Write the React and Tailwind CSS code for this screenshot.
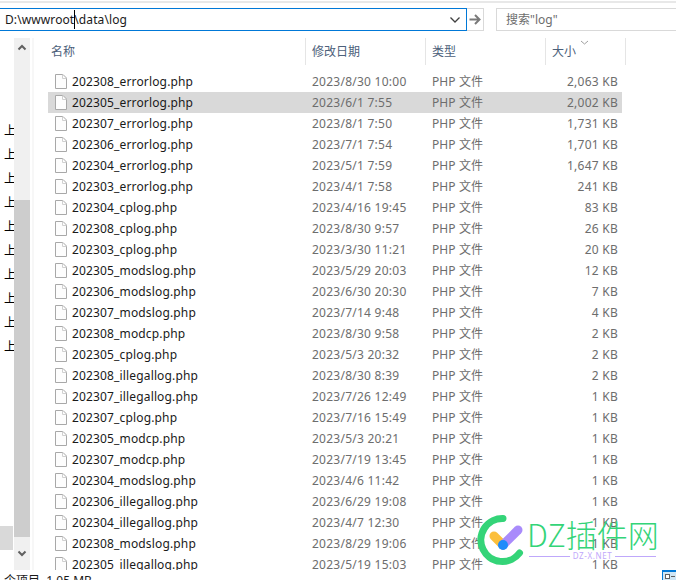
const FONT = "font-['Noto_Sans','Noto_Sans_CJK_SC',sans-serif]";

const rows = [
  ["202308_errorlog.php", "2023/8/30 10:00", "2,063 KB"],
  ["202305_errorlog.php", "2023/6/1 7:55", "2,002 KB"],
  ["202307_errorlog.php", "2023/8/1 7:50", "1,731 KB"],
  ["202306_errorlog.php", "2023/7/1 7:54", "1,701 KB"],
  ["202304_errorlog.php", "2023/5/1 7:59", "1,647 KB"],
  ["202303_errorlog.php", "2023/4/1 7:58", "241 KB"],
  ["202304_cplog.php", "2023/4/16 19:45", "83 KB"],
  ["202308_cplog.php", "2023/8/30 9:57", "26 KB"],
  ["202303_cplog.php", "2023/3/30 11:21", "20 KB"],
  ["202305_modslog.php", "2023/5/29 20:03", "12 KB"],
  ["202306_modslog.php", "2023/6/30 20:30", "7 KB"],
  ["202307_modslog.php", "2023/7/14 9:48", "4 KB"],
  ["202308_modcp.php", "2023/8/30 9:58", "2 KB"],
  ["202305_cplog.php", "2023/5/3 20:32", "2 KB"],
  ["202308_illegallog.php", "2023/8/30 8:39", "2 KB"],
  ["202307_illegallog.php", "2023/7/26 12:49", "1 KB"],
  ["202307_cplog.php", "2023/7/16 15:49", "1 KB"],
  ["202305_modcp.php", "2023/5/3 20:21", "1 KB"],
  ["202307_modcp.php", "2023/7/19 13:45", "1 KB"],
  ["202304_modslog.php", "2023/4/6 11:42", "1 KB"],
  ["202306_illegallog.php", "2023/6/29 19:08", "1 KB"],
  ["202304_illegallog.php", "2023/4/7 12:30", "1 KB"],
  ["202308_modslog.php", "2023/8/29 19:06", "1 KB"],
  ["202305_illegallog.php", "2023/5/19 15:03", "1 KB"],
];

function FileIcon() {
  return (
    <svg width="14" height="17" viewBox="0 0 14 17" className="shrink-0">
      <path d="M1.5 1.5H9L12.5 5V15.5H1.5Z" fill="#fdfdfd" stroke="#a8a8a8" />
      <path d="M8.5 1.5V5.5H12.5" fill="none" stroke="#d0d0d0" />
    </svg>
  );
}

function Chevron({ up, className }) {
  return (
    <svg width="10" height="7" viewBox="0 0 10 7" className={className}>
      <path d={up ? "M1.5 5.5L5 2L8.5 5.5" : "M1.5 1.5L5 5L8.5 1.5"} fill="none" stroke="#606060" strokeWidth="2" />
    </svg>
  );
}

function Header({ label, className }) {
  return (
    <div className={`h-[27px] flex items-center border-r border-[#e5e5e5] text-[12px] text-[#4c607a] ${className}`}>
      {label}
    </div>
  );
}

export default function App() {
  return (
    <div className={`relative w-[676px] h-[580px] overflow-hidden bg-white flex flex-col ${FONT} text-[12px]`}>
      <div className="h-[3px] border-b-2 border-[#e8e8e8] shrink-0" />
      <div className="h-[5px] shrink-0" />

      <div className="h-[23px] shrink-0 flex">
        <div className="w-[467px] border-y border-r border-[#0078d7] flex items-center pl-[5px] pr-[4px] relative">
          <span className="text-[#1a1a1a] tracking-[0.1px]">D:\wwwroot\data\log</span>
          <div className="absolute left-[74px] top-[1px] w-px h-[19px] bg-black" />
          <svg width="12" height="8" viewBox="0 0 12 8" className="ml-auto mr-[1px]">
            <path d="M1.5 1.5L6 6L10.5 1.5" fill="none" stroke="#404040" strokeWidth="1.3" />
          </svg>
        </div>
        <div className="w-[17px] border-y border-r border-[#d9d9d9] flex items-center justify-center">
          <svg width="12" height="11" viewBox="0 0 12 11">
            <path d="M0.5 5.5H10M6 1L10.5 5.5L6 10" fill="none" stroke="#7a7a7a" strokeWidth="2" />
          </svg>
        </div>
        <div className="ml-[12px] flex-1 border-y border-l border-[#d9d9d9] flex items-center pl-[9px] text-[#6d6d6d]">
          搜索"log"
        </div>
      </div>

      <div className="h-[7px] shrink-0" />

      <div className="flex-1 min-h-0 flex">
        <div className="w-[14px] shrink-0 relative flex flex-col">
          <div className="h-[81px] shrink-0" />
          {Array.from({ length: 10 }).map((_, i) => (
            <div key={i} className="h-[24px] shrink-0 pl-[4px] leading-[24px] text-[12px] text-black overflow-hidden">上</div>
          ))}
          <div className="mt-[167px] h-[24px] w-[13px] bg-[#d9d9d9] shrink-0" />
        </div>

        <div className="w-[16px] h-[532px] shrink-0 bg-[#f0f0f0] flex flex-col items-center">
          <div className="h-[162px] w-full pt-[6px] flex justify-center items-start">
            <Chevron up />
          </div>
          <div className="h-[337px] w-full bg-[#cdcdcd]" />
          <div className="flex-1 w-full flex justify-center items-center">
            <Chevron />
          </div>
        </div>

        <div className="w-[2px] ml-[2px] h-[532px] bg-[#f7f7f7] shrink-0" />

        <div className="flex-1 min-w-0 flex flex-col pl-[14px]">
          <div className="h-[27px] flex shrink-0 relative">
            <Header label="名称" className="w-[258px] pl-[3px]" />
            <Header label="修改日期" className="w-[120px] pl-[6px]" />
            <Header label="类型" className="w-[120px] pl-[6px]" />
            <Header label="大小" className="w-[80px] pl-[6px]" />
            <svg width="9" height="5" viewBox="0 0 9 5" className="absolute left-[532px] top-[2px]">
              <path d="M1 1L4.5 4L8 1" fill="none" stroke="#a0a0a0" />
            </svg>
          </div>
          <div className="h-[6px] shrink-0" />
          <div className="h-[499px] overflow-hidden">
            {rows.map((r, i) => (
              <div key={r[0]} className={`h-[21px] w-[574px] flex items-center ${i === 1 ? "bg-[#d9d9d9]" : ""}`}>
                <div className="w-[264px] pl-[6px] flex items-center gap-[4px] text-[#1a1a1a] tracking-[0.15px]">
                  <FileIcon />
                  <span>{r[0]}</span>
                </div>
                <div className="w-[120px] text-[#6d6d6d] tracking-[0.25px]">{r[1]}</div>
                <div className="w-[100px] text-[#6d6d6d] tracking-[0.1px]">PHP 文件</div>
                <div className="w-[86px] text-right text-[#6d6d6d] tracking-[0.25px]">{r[2]}</div>
              </div>
            ))}
          </div>
        </div>
      </div>

      <div className="h-[10px] shrink-0 flex overflow-hidden">
        <div className="pl-[4px] pt-[3px] text-[12px] leading-[16px] text-[#1a1a1a] whitespace-pre">个项目  1.05 MB</div>
        <div className="ml-auto w-[14px] border-l border-t-2 border-[#0078d7] bg-[#cfe6f5] flex items-start pl-[2px] pt-[2px] gap-px">
          <div className="w-[5px] h-[5px] border border-[#606060] bg-white" />
          <div className="w-[4px] h-px mt-[2px] bg-[#606060]" />
        </div>
      </div>

      <div className="absolute left-[475px] top-[513px] w-[190px] h-[56px] pointer-events-none">
        <svg width="54" height="56" viewBox="0 0 54 56" className="absolute left-0 top-0">
          <path d="M28 5.5A21.5 21.5 0 1 0 44.5 40" fill="none" stroke="#34d478" strokeWidth="7" strokeLinecap="round" />
          <path d="M19 23L28 32" stroke="#fbbf3c" strokeWidth="9" strokeLinecap="round" />
          <path d="M28 32L43 17" stroke="#a98bfb" strokeWidth="9" strokeLinecap="round" />
          <circle cx="28" cy="32" r="5" fill="#1e8bfa" />
        </svg>
        <div className="absolute left-[52px] top-[-2px] text-[31px] leading-[46px] text-[#34d478] whitespace-nowrap font-['Noto_Sans_CJK_SC','Noto_Sans',sans-serif] font-light">DZ插件网</div>
        <div className="absolute left-[54px] top-[37px] w-[127px] flex items-center gap-[3px]">
          <div className="flex-1 h-px bg-[#bfa8fb]" />
          <span className="text-[8px] leading-[12px] tracking-[0.6px] text-[#bfa8fb]">DZ-X.NET</span>
          <div className="flex-1 h-px bg-[#bfa8fb]" />
        </div>
      </div>
    </div>
  );
}
